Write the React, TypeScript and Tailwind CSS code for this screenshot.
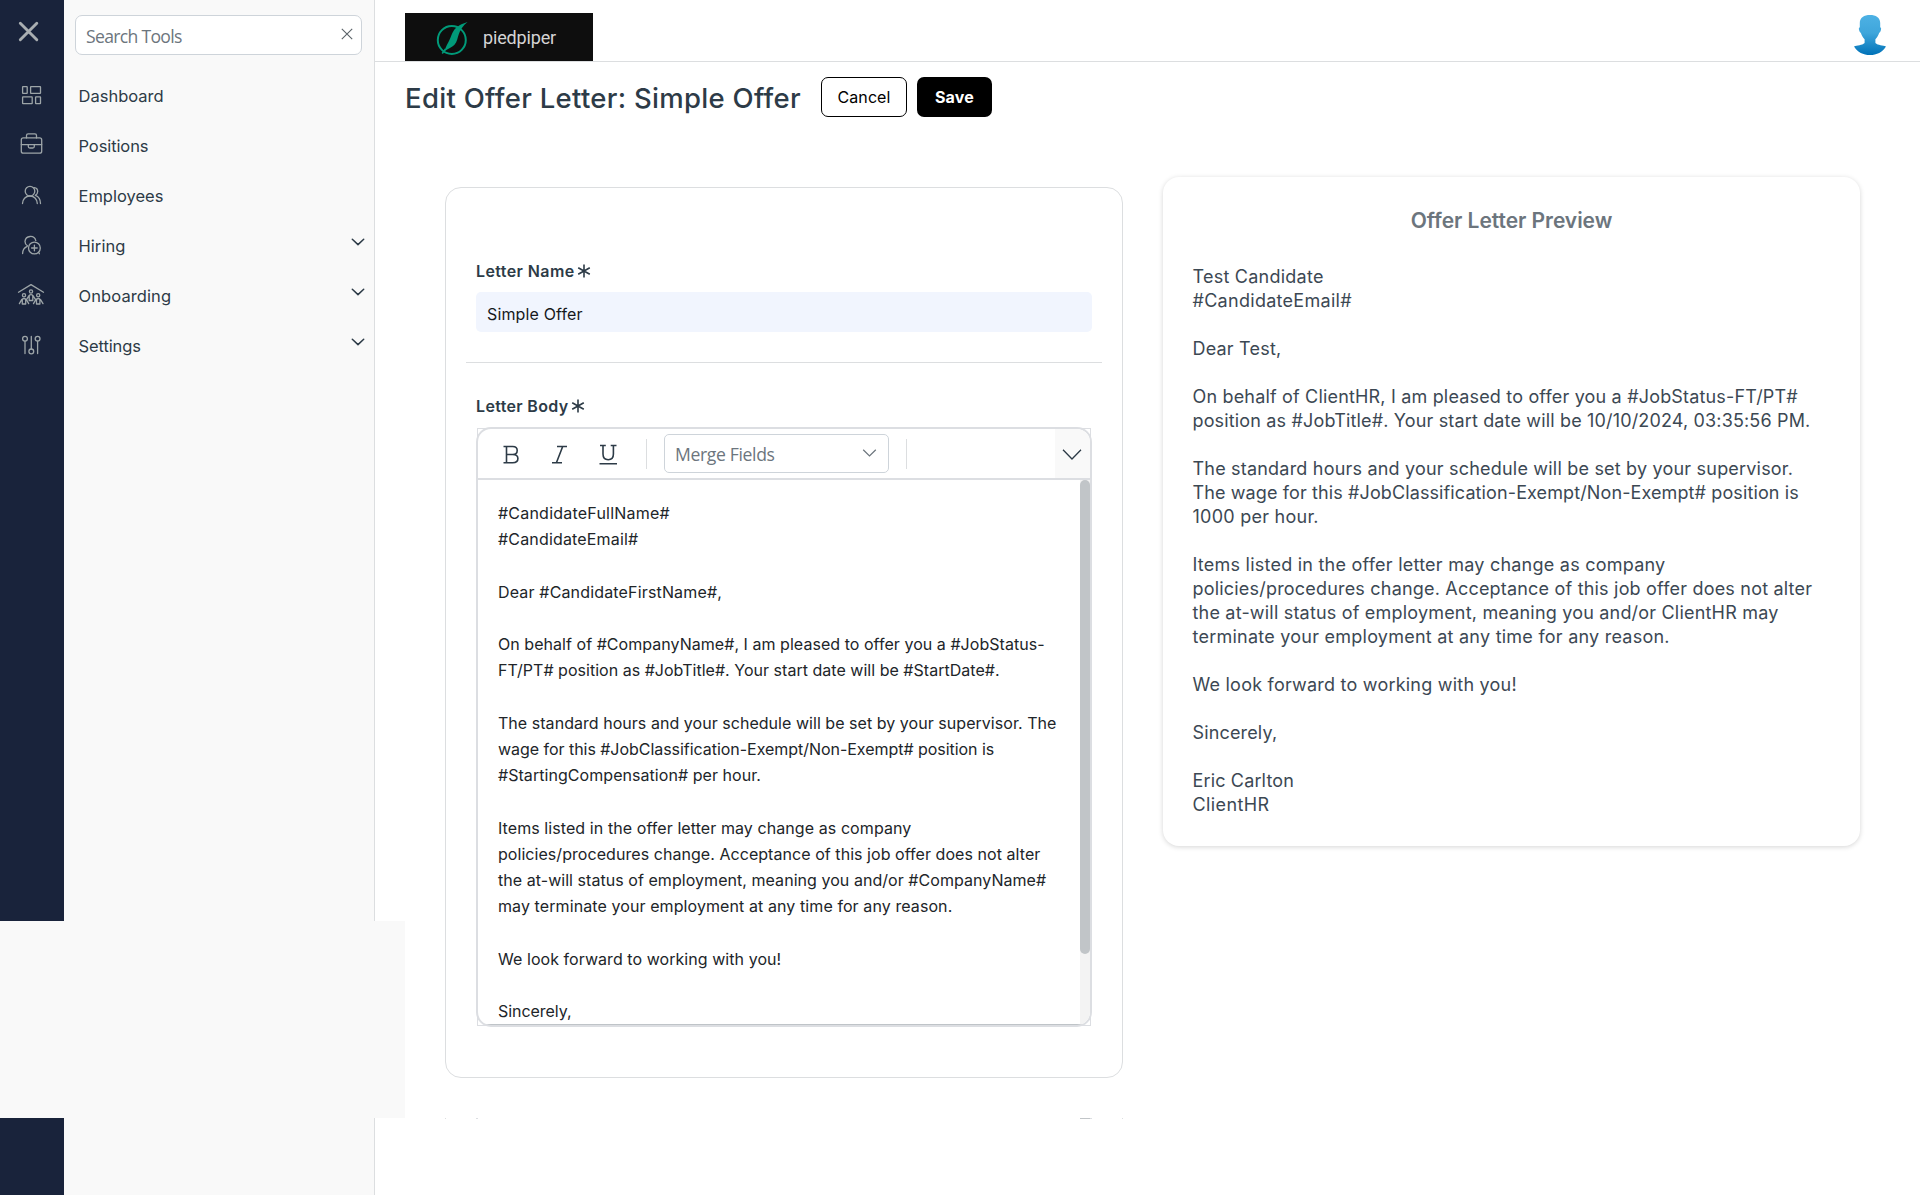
import type { ReactNode } from "react";

type Line = [string, string];

const NAV: { label: string; tracking: string; caret?: boolean }[] = [
  { label: "Dashboard", tracking: "tracking-[0px]" },
  { label: "Positions", tracking: "tracking-[-0.1px]" },
  { label: "Employees", tracking: "tracking-[0px]" },
  { label: "Hiring", tracking: "tracking-[0.05px]", caret: true },
  { label: "Onboarding", tracking: "tracking-[0.1px]", caret: true },
  { label: "Settings", tracking: "tracking-[-0.1px]", caret: true },
];

const BODY: Line[] = [
  ["#CandidateFullName#", "tracking-[0.216px]"],
  ["#CandidateEmail#", "tracking-[0.168px]"],
  ["", ""],
  ["Dear #CandidateFirstName#,", "tracking-[0.16px]"],
  ["", ""],
  ["On behalf of #CompanyName#, I am pleased to offer you a #JobStatus-", "tracking-[0.044px]"],
  ["FT/PT# position as #JobTitle#. Your start date will be #StartDate#.", "tracking-[0.025px]"],
  ["", ""],
  ["The standard hours and your schedule will be set by your supervisor. The", "tracking-[0.04px]"],
  ["wage for this #JobClassification-Exempt/Non-Exempt# position is", "tracking-[-0.039px]"],
  ["#StartingCompensation# per hour.", "tracking-[0.054px]"],
  ["", ""],
  ["Items listed in the offer letter may change as company", "tracking-[0.079px]"],
  ["policies/procedures change. Acceptance of this job offer does not alter", "tracking-[0.054px]"],
  ["the at-will status of employment, meaning you and/or #CompanyName#", "tracking-[0.049px]"],
  ["may terminate your employment at any time for any reason.", "tracking-[0.09px]"],
  ["", ""],
  ["We look forward to working with you!", "tracking-[0.055px]"],
  ["", ""],
  ["Sincerely,", "tracking-[-0.043px]"],
];

const PREVIEW: Line[] = [
  ["Test Candidate", "tracking-[0.241px]"],
  ["#CandidateEmail#", "tracking-[0.285px]"],
  ["", ""],
  ["Dear Test,", "tracking-[0.2px]"],
  ["", ""],
  ["On behalf of ClientHR, I am pleased to offer you a #JobStatus-FT/PT#", "tracking-[0.175px]"],
  ["position as #JobTitle#. Your start date will be 10/10/2024, 03:35:56 PM.", "tracking-[0.155px]"],
  ["", ""],
  ["The standard hours and your schedule will be set by your supervisor.", "tracking-[0.198px]"],
  ["The wage for this #JobClassification-Exempt/Non-Exempt# position is", "tracking-[0.112px]"],
  ["1000 per hour.", "tracking-[0.25px]"],
  ["", ""],
  ["Items listed in the offer letter may change as company", "tracking-[0.236px]"],
  ["policies/procedures change. Acceptance of this job offer does not alter", "tracking-[0.195px]"],
  ["the at-will status of employment, meaning you and/or ClientHR may", "tracking-[0.194px]"],
  ["terminate your employment at any time for any reason.", "tracking-[0.24px]"],
  ["", ""],
  ["We look forward to working with you!", "tracking-[0.22px]"],
  ["", ""],
  ["Sincerely,", "tracking-[0.15px]"],
  ["", ""],
  ["Eric Carlton", "tracking-[0.152px]"],
  ["ClientHR", "tracking-[0.4px]"],
];

function RailIcon({ top, children }: { top: number; children: ReactNode }) {
  return (
    <svg
      className="block h-[50px] w-16 shrink-0"
      viewBox={`0 ${top} 64 50`}
      fill="none"
      stroke="#9da5a8"
      strokeWidth="1.3"
      strokeLinecap="round"
      strokeLinejoin="round"
    >
      {children}
    </svg>
  );
}

function Rail() {
  return (
    <div className="h-full w-16 shrink-0 bg-[#19233b]">
      <svg className="block h-[70px] w-16" viewBox="0 0 64 70" stroke="#a9aeb1" strokeWidth="2.9" strokeLinecap="round">
        <path d="M20.3 23.3 36.8 39.8M36.8 23.3 20.3 39.8" />
      </svg>
      <RailIcon top={70}>
        <rect x="22.6" y="86.6" width="4.6" height="6.8" rx=".4" />
        <rect x="30.6" y="86.6" width="9.9" height="6.8" rx=".4" />
        <rect x="22.6" y="96.9" width="9.6" height="6.7" rx=".4" />
        <rect x="35.6" y="96.9" width="4.9" height="6.7" rx=".4" />
      </RailIcon>
      <RailIcon top={120}>
        <rect x="21.3" y="137.9" width="20.4" height="15.3" rx="2" />
        <path d="M26.5 137.9v-2.4q0-1.6 1.6-1.6h6.8q1.6 0 1.6 1.6v2.4M21.3 144.6h7M34.3 144.6h7.4M28.3 144.6h6v1.9q0 1.5-1.5 1.5h-3q-1.5 0-1.5-1.5z" />
      </RailIcon>
      <RailIcon top={170}>
        <circle cx="30" cy="191.2" r="4.8" />
        <path d="M22.5 203.6c0-4.2 3-7.6 7.4-7.6s7.4 3.4 7.4 7.6M34.2 187.7c2.1.2 3.5 1.7 3.5 3.8 0 1.8-1 3.1-2.4 3.8 3.2 1.1 5.2 4.4 5.2 8.3" />
      </RailIcon>
      <RailIcon top={220}>
        <path d="M27.4 245.8c-1.500-1-2.400-2.500-2.400-4.400a5.500 5.500 0 0 1 10.800-.8M22.600 253.600c0-3.200 1.700-6 4.600-7.300" />
        <circle cx="34.4" cy="248" r="5.9" />
        <path d="M34.4 245.2v5.6M31.6 248h5.6M38.6 252.4l.8 1.4" />
      </RailIcon>
      <RailIcon top={270}>
        <path d="M18.5 292.2 31 284.6l12.5 7.6" />
        <circle cx="31" cy="291.5" r="1.6" />
        <circle cx="24" cy="295.3" r="1.6" />
        <circle cx="38.2" cy="295.3" r="1.6" />
        <path d="M29.2 300.5v-4.3q0-1.5 1.8-1.5t1.8 1.5v4.3zM29 295.6l-2.2 3.6M33 295.6l2.2 3.6M22.3 304v-4q0-1.5 1.7-1.5t1.7 1.5v4zM36.5 304v-4q0-1.5 1.7-1.5t1.7 1.5v4zM21.8 299.4l-2.4 4.2M40.4 299.4l2.6 4.2M26.3 299.4l2.4 4.2M35.9 299.4l-2.4 4.2" />
      </RailIcon>
      <RailIcon top={320}>
        <circle cx="25" cy="338.7" r="2.4" />
        <circle cx="31.3" cy="351.4" r="2.4" />
        <circle cx="37.6" cy="338.7" r="2.4" />
        <path d="M25 341.1v12.4M31.3 336.4V349M37.6 341.1v12.4" />
      </RailIcon>
    </div>
  );
}

function Sidebar() {
  return (
    <div className="h-full w-[311px] shrink-0 border-r border-[#dcdee0] bg-[#f9f9f9] pt-[15px]">
      <div className="ml-[11px] flex h-10 w-[287px] items-center justify-between rounded-[7px] border border-[#ced4da] bg-white pr-[7px] pl-[10px]">
        <span className="pt-[2px] font-['Open_Sans',sans-serif] text-[17.6px] leading-6 tracking-[-0.69px] text-[#6c757d]">Search Tools</span>
        <svg className="mb-[2px] size-[14px]" viewBox="0 0 14 14" stroke="#5a6268" strokeWidth="1.1">
          <path d="M1.8 1.8 12.2 12.2M12.2 1.8 1.8 12.2" />
        </svg>
      </div>
      <nav className="mt-[16px]">
        {NAV.map((n) => (
          <div key={n.label} className="flex h-[50px] items-center justify-between pr-[9px] pl-[14.5px]">
            <span className={"text-[16.5px] text-[#2d3b47] " + n.tracking}>{n.label}</span>
            {n.caret && (
              <svg className="mb-2 h-2 w-[14px]" viewBox="0 0 14 8" fill="none" stroke="#2d3b47" strokeWidth="1.5" strokeLinecap="round" strokeLinejoin="round">
                <path d="M1.3 1.2 7 6.6l5.7-5.4" />
              </svg>
            )}
          </div>
        ))}
      </nav>
    </div>
  );
}

function Asterisk() {
  return (
    <svg className="ml-[2.5px] h-[14px] w-[14px]" viewBox="0 0 14 14" stroke="#2d3b47" strokeWidth="1.6">
      <path d="M7 .5v13M1.200 3.700l11.600 6.600M12.800 3.700 1.200 10.300" />
    </svg>
  );
}

function Header() {
  return (
    <div className="flex h-[62px] items-start justify-between border-b border-[#dcdee0] pt-[13px] pr-[33px] pl-[30px]">
      <div className="flex h-12 w-[188px] bg-[#0e0e0e]">
        <svg className="h-12 w-[74px]" viewBox="0 0 74 48" fill="none">
          <circle cx="46.800" cy="27" r="14" stroke="#019a79" strokeWidth="2" />
          <path d="M62.600 9C57 10.500 51.500 13.500 48.800 17.500c-2.300 3.500-2.800 6.500-4.600 10C42.800 30.500 41 33 39.200 38.500 42.500 35.500 46.500 35 49.300 32c3-3.300 3.200-7.300 4.400-10.500C55 17.500 58 12.500 62.600 9z" fill="#019a79" />
          <path d="M40.500 36 37.200 40.500" stroke="#019a79" strokeWidth="1.500" />
        </svg>
        <span className="mt-[13px] ml-[4px] font-['Roboto',sans-serif] text-[18px] leading-6 tracking-[-0.15px] text-[#d4d4d4]">piedpiper</span>
      </div>
      <svg className="mt-[1px] h-[42px] w-[34px]" viewBox="0 0 34 42">
        <defs>
          <linearGradient id="avatar" x1="0" y1="0" x2="0" y2="1">
            <stop offset="0" stopColor="#4db1e4" />
            <stop offset=".45" stopColor="#3fa6db" />
            <stop offset="1" stopColor="#0072b8" />
          </linearGradient>
        </defs>
        <path
          d="M17 1c5.800 0 10.200 2.500 10.200 8v4.300c1.100.3 1.100 1.600.6 3.100-.4 1.200-.8 2-1.600 2.300-.9 2.600-2.300 5-3.800 6.600v3.700c2.600 2.400 7.500 2.400 10.600 3.400C29.500 38 23.800 41 17 41S4.500 38 1 32.400c3.100-1 8-1 10.600-3.400v-3.700c-1.500-1.600-2.900-4-3.800-6.600-.8-.3-1.200-1.100-1.600-2.300-.5-1.500-.5-2.800.6-3.100V9C6.800 3.500 11.200 1 17 1z"
          fill="url(#avatar)"
        />
      </svg>
    </div>
  );
}

function Toolbar() {
  return (
    <div className="flex h-[51px] items-center border-b-2 border-[#dcdee2]">
      <svg className="h-[49px] w-[150px] shrink-0" viewBox="478.500 429 150 49" fill="none" stroke="#2d3b47" strokeWidth="1.600">
        <path d="M504 446.500h9.200c2.800 0 4.500 1.600 4.500 4s-1.700 4-4.500 4h-6M513.200 454.500c3.200 0 5.200 1.600 5.200 4.100s-2 4.200-5.200 4.200H504M507 446.500v16.300" />
        <path d="M557.500 446.500h10M552.500 462.800h10M563.200 446.500l-6.300 16.300" />
        <path d="M600.500 445.500h5.800M611.200 445.500h5.800M603.500 445.500v8.500c0 3.600 1.900 5.700 5.200 5.700s5.200-2.100 5.200-5.700v-8.500M600 463.800h17.500" />
      </svg>
      <div className="ml-[18px] h-[30px] w-px bg-[#dcdee0]" />
      <div className="ml-[17px] flex h-[39px] w-[225px] items-center justify-between rounded-[5px] border border-[#ced4da] bg-white pr-[11px] pl-[10px]">
        <span className="pt-px font-['Open_Sans',sans-serif] text-[17.6px] leading-6 tracking-[-0.36px] text-[#6c757d]">Merge Fields</span>
        <svg className="mb-px h-2 w-[15px]" viewBox="0 0 15 8" fill="none" stroke="#6c757d" strokeWidth="1.200">
          <path d="M1.200.8 7.500 7l6.300-6.200" />
        </svg>
      </div>
      <div className="ml-[17px] h-[30px] w-px bg-[#dcdee0]" />
      <div className="ml-auto flex h-[49px] w-[35px] items-center justify-center rounded-tr-[13px] bg-[#f9f9f9] pt-px pr-[2px]">
        <svg className="h-[11px] w-5" viewBox="0 0 20 11" fill="none" stroke="#2d3b47" strokeWidth="1.300">
          <path d="M1 .8 10 10 19 .8" />
        </svg>
      </div>
    </div>
  );
}

function Editor() {
  return (
    <div className="relative mt-[9px] ml-[30px] h-[600px] w-[616px]">
      <div className="absolute inset-x-[1px] top-[1px] bottom-[1px] border border-[#dcdee2]" />
      <div className="relative flex h-full flex-col overflow-hidden rounded-[15px] border-2 border-[#dcdee2] bg-white">
        <Toolbar />
        <div className="flex min-h-0 flex-1 border-b border-[#bfc4c8]">
          <div className="flex-1 overflow-hidden pt-[20px] pl-[20px]">
            {BODY.map(([t, c], i) => (
              <div key={i} className={"h-[26.23px] text-[16px] leading-[26.23px] whitespace-nowrap text-[#212529] " + c}>{t}</div>
            ))}
          </div>
          <div className="w-[10px] bg-[#f3f3f3]">
            <div className="h-[474px] rounded-full bg-[#c1c5c8]" />
          </div>
        </div>
      </div>
    </div>
  );
}

export default function App() {
  return (
    <div className="relative flex h-[1195px] w-[1920px] overflow-hidden bg-white font-['Inter',sans-serif]">
      <Rail />
      <Sidebar />
      <div className="min-w-0 flex-1">
        <Header />
        <div className="flex h-[70px] items-center pl-[30px]">
          <h1 className="w-[416px] pt-[2px] text-[27.5px] leading-8 font-medium tracking-[0.3px] whitespace-nowrap text-[#2d3b47]">Edit Offer Letter: Simple Offer</h1>
          <button className="flex h-10 w-[86px] items-center justify-center rounded-[7px] border border-black bg-white text-[16px] tracking-[0.08px] text-black">Cancel</button>
          <button className="ml-[10px] flex h-10 w-[75px] items-center justify-center rounded-[7px] bg-black text-[16px] font-bold tracking-[0.2px] text-white">Save</button>
        </div>
        <div className="flex items-start">
          <div className="mt-[55px] ml-[70px] h-[891px] w-[678px] shrink-0 rounded-[16px] border border-[#dcdee0] pt-[71px]">
            <div className="ml-[30px] flex h-6 items-center">
              <span className="text-[16px] font-semibold tracking-[0.4px] text-[#2d3b47]">Letter Name</span>
              <Asterisk />
            </div>
            <div className="mt-[9px] ml-[30px] flex h-10 w-[616px] items-center rounded-[5px] bg-[#f1f5fe] pt-[4px] pl-[11px] text-[16px] tracking-[0.14px] text-[#16191c]">Simple Offer</div>
            <div className="mt-[30px] ml-[20px] h-px w-[636px] bg-[#dcdee0]" />
            <div className="mt-[31px] ml-[30px] flex h-6 items-center">
              <span className="text-[16px] font-semibold tracking-[0.34px] text-[#2d3b47]">Letter Body</span>
              <Asterisk />
            </div>
            <Editor />
          </div>
          <div className="mt-[45px] ml-[40px] h-[669px] w-[697px] shrink-0 rounded-[16px] pt-[27px] shadow-[0_1px_5px_rgba(0,0,0,0.17)]">
            <h2 className="text-center text-[21px] leading-[34px] font-semibold tracking-[-0.05px] text-[#6c757d]">Offer Letter Preview</h2>
            <div className="mt-[27px] pl-[29.5px]">
              {PREVIEW.map(([t, c], i) => (
                <div key={i} className={"h-6 text-[18px] leading-6 whitespace-nowrap text-[#3c4853] " + c}>{t}</div>
              ))}
            </div>
          </div>
        </div>
        <div className="mt-[40px] ml-[70px] flex h-px w-[678px]">
          <div className="w-px bg-[#dcdee0]" />
          <div className="ml-[30px] w-[2px] bg-[#dcdee2]" />
          <div className="ml-[602px] w-[10px] bg-[#c1c5c8]" />
          <div className="w-[2px] bg-[#dcdee2]" />
          <div className="ml-auto w-px bg-[#dcdee0]" />
        </div>
      </div>
      <div className="absolute top-[921px] left-0 h-[197px] w-[405px] bg-[#f9f9f9]" />
    </div>
  );
}
